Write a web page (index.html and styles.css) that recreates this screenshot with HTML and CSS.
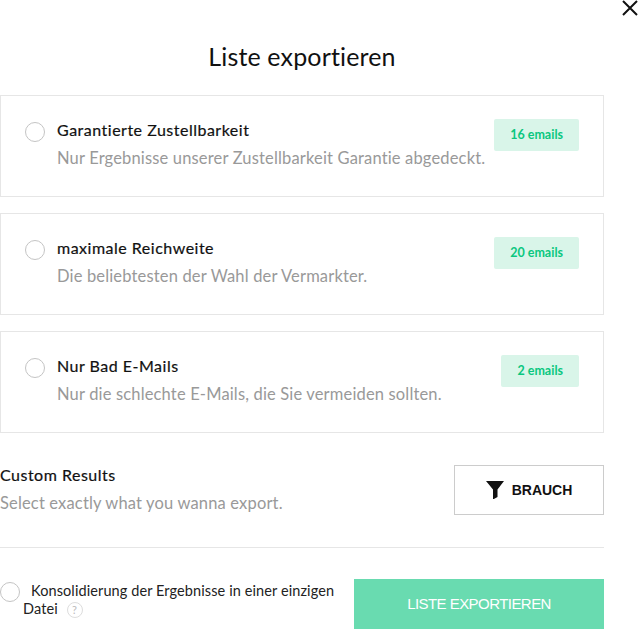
FILE: index.html
```html
<!DOCTYPE html>
<html>

<head>
    <title>Liste exportieren</title>
    <link rel="stylesheet" href="styles.css">
</head>

<body>
    <!-- Close button sits over the corner of the dialog -->
    <button class="close" aria-label="Close">
        <svg width="16" height="16" viewBox="0 0 16 16">
            <path d="M1 1L15 15M15 1L1 15" stroke="#111" stroke-width="2" fill="none" />
        </svg>
    </button>

    <div class="dialog">
        <h1>Liste exportieren</h1>

        <!-- Export options -->
        <div class="option">
            <span class="radio"></span>
            <div class="option-text">
                <div class="title">Garantierte Zustellbarkeit</div>
                <div class="desc">Nur Ergebnisse unserer Zustellbarkeit Garantie abgedeckt.</div>
            </div>
            <span class="badge">16 emails</span>
        </div>

        <div class="option">
            <span class="radio"></span>
            <div class="option-text">
                <div class="title">maximale Reichweite</div>
                <div class="desc">Die beliebtesten der Wahl der Vermarkter.</div>
            </div>
            <span class="badge">20 emails</span>
        </div>

        <div class="option">
            <span class="radio"></span>
            <div class="option-text">
                <div class="title">Nur Bad E-Mails</div>
                <div class="desc">Nur die schlechte E-Mails, die Sie vermeiden sollten.</div>
            </div>
            <span class="badge">2 emails</span>
        </div>

        <!-- Custom results -->
        <div class="custom">
            <div class="custom-text">
                <div class="title">Custom Results</div>
                <div class="desc">Select exactly what you wanna export.</div>
            </div>
            <button class="custom-btn">
                <svg width="18" height="18" viewBox="0 0 18 18">
                    <path d="M0 0H18L11.5 8.5V16L7 18.5V8.5Z" fill="#111" />
                </svg>
                BRAUCH
            </button>
        </div>

        <div class="footer">
            <div class="consolidate">
                <span class="radio radio-small"></span>
                Konsolidierung der Ergebnisse in einer einzigen Datei
                <span class="help">?</span>
            </div>
            <button class="export-btn">LISTE EXPORTIEREN</button>
        </div>
    </div>
</body>
</html>
```

FILE: styles.css
```css
body {
    margin: 0;
    background: #fff;
    font-family: "Lato", sans-serif;
    font-variant-ligatures: none;
    color: #111;
}

.close {
    position: absolute;
    top: 0;
    left: 622px;
    width: 16px;
    height: 16px;
    padding: 0;
    border: 0;
    background: none;
}

.dialog {
    width: 604px;
}

h1 {
    margin: 0;
    height: 95px;
    padding-top: 40px;
    box-sizing: border-box;
    text-align: center;
    font-size: 25px;
    line-height: 32px;
    font-weight: 400;
    letter-spacing: 0.15px;
}

.option {
    display: flex;
    align-items: flex-start;
    height: 102px;
    box-sizing: border-box;
    margin-bottom: 16px;
    padding: 23px 24px 0 24px;
    border: 1px solid #e6e6e6;
}

.radio {
    flex: none;
    width: 20px;
    height: 20px;
    box-sizing: border-box;
    margin-top: 3px;
    border: 1px solid #c4c4c4;
    border-radius: 50%;
}

.option-text {
    flex: 1;
    margin-left: 12px;
}

.title {
    font-size: 16px;
    line-height: 22px;
    letter-spacing: 0.5px;
    -webkit-text-stroke: 0.2px #111;
}

.desc {
    margin-top: 6px;
    font-size: 16.5px;
    line-height: 22px;
    letter-spacing: 0.16px;
    color: #999;
}

.badge {
    padding: 0 16px;
    height: 32px;
    line-height: 32px;
    background: #d9f5e9;
    border-radius: 2px;
    color: #0ac77f;
    font-size: 12.5px;
    font-weight: 700;
}

.custom {
    display: flex;
    justify-content: space-between;
    align-items: center;
    height: 50px;
    margin-top: 32px;
    padding-bottom: 32px;
    border-bottom: 1px solid #e6e6e6;
    margin-bottom: 31px;
}

.custom-text {
    padding-bottom: 2px;
}

.custom-btn {
    display: flex;
    align-items: center;
    justify-content: center;
    gap: 8px;
    width: 150px;
    height: 50px;
    padding: 0;
    border: 1px solid #ccc;
    background: #fff;
    font-family: "Liberation Sans", sans-serif;
    font-size: 14px;
    font-weight: 700;
    color: #111;
}

.footer {
    display: flex;
    justify-content: space-between;
    align-items: flex-start;
}

.consolidate {
    width: 317px;
    padding: 3px 0 0 23px;
    font-size: 14.5px;
    line-height: 18px;
    letter-spacing: 0.1px;
    color: #222;
}

.radio-small {
    float: left;
    margin: 0 11px -4px -23px;
}

.help {
    display: inline-block;
    width: 14px;
    height: 14px;
    margin-left: 5px;
    border: 1px solid #ddd;
    border-radius: 50%;
    text-align: center;
    font-size: 11px;
    line-height: 14px;
    color: #bbb;
}

.export-btn {
    width: 250px;
    height: 50px;
    padding-bottom: 2px;
    border: 0;
    background: #69dbb0;
    color: #fff;
    font-family: "Liberation Sans", sans-serif;
    font-size: 15px;
    letter-spacing: -0.55px;
}
```
